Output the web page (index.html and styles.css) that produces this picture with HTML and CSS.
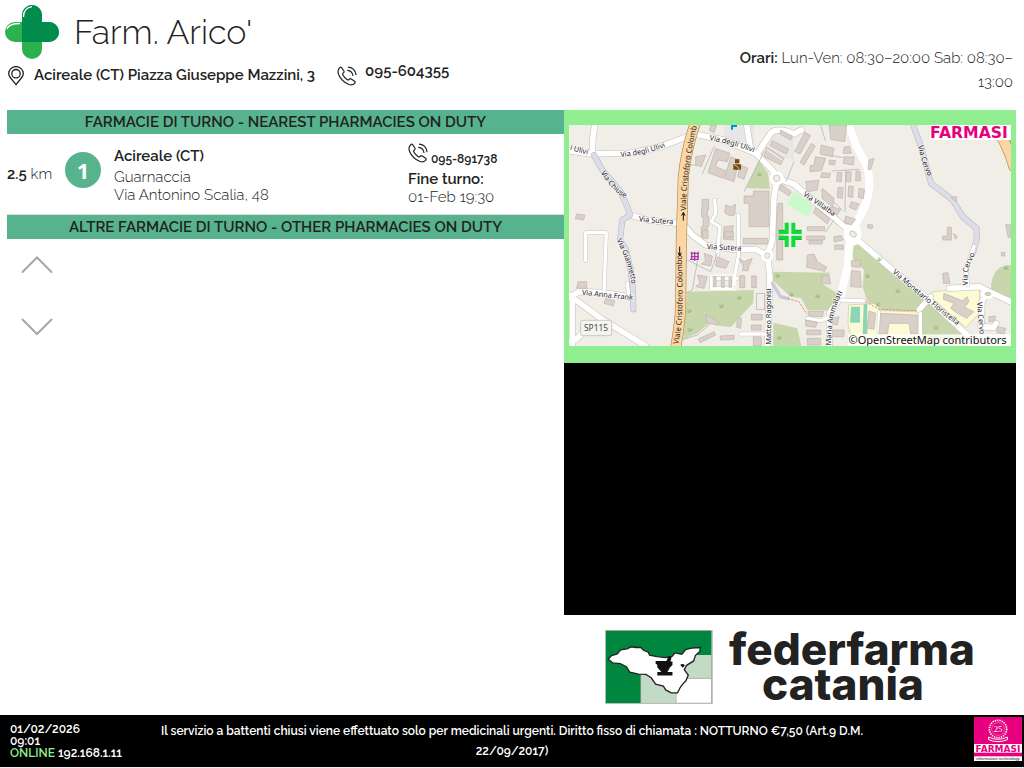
FILE: index.html
```html
<!DOCTYPE html>
<html lang="it">
<head>
<meta charset="utf-8">
<title>Farm. Arico'</title>
<link rel="stylesheet" href="styles.css">
</head>
<body>
<svg class="defs" aria-hidden="true">
  <symbol id="phone" viewBox="0 0 20 20">
    <g fill="none" stroke="#222" stroke-width="1.2" stroke-linecap="round" stroke-linejoin="round">
      <path d="M4.600 1.600 6.900 5Q7.400 6.200 6.300 7Q5.200 7.900 6 9.300Q7.600 12 10.200 13.700Q11.400 14.400 12.200 13.300Q13 12.300 14.200 13L17.600 15.200Q18.600 16.100 17.600 17.300Q15.500 19.700 12 18.500Q4.500 15.500 1.600 8.500Q0 4.200 2.700 1.700Q3.700.7 4.600 1.600Z"/>
      <path d="M11.500 1.200Q18 2 19 8.700M10.700 4.300Q15.200 4.900 15.900 9.500"/>
    </g>
  </symbol>
</svg>

<header class="header">
  <div class="identity">
    <h1 class="brand">
      <svg class="brand-logo" viewBox="0 0 54 54" aria-hidden="true">
        <rect x="17" y="0" width="20" height="54" rx="10" fill="#2bb24c"/>
        <rect x="0" y="17" width="54" height="20" rx="10" fill="#2bb24c"/>
        <path d="M17 37V10a10 10 0 0 1 20 0v7h7a10 10 0 0 1 0 20Z" fill="#018b4c"/>
        <path d="M18.500 12Q18.500 3 27 1.700" fill="none" stroke="#fff" stroke-width="1.300"/>
        <path d="M2 24Q4 18.500 15 18.500" fill="none" stroke="#fff" stroke-width="1.300"/>
      </svg>
      <span>Farm. Arico'</span>
    </h1>
    <div class="contacts">
      <svg class="pin" viewBox="0 0 16 20" aria-hidden="true">
        <g fill="none" stroke="#222" stroke-width="1.300"><path d="M8 18.600 2.300 11.500Q.7 9.500.7 7.600a7.300 7 0 0 1 14.600 0q0 1.900-1.600 3.900Z"/><circle cx="8" cy="7.700" r="4.200"/></g>
      </svg>
      <address class="address">Acireale (CT) Piazza Giuseppe Mazzini, 3</address>
      <svg class="phone" aria-hidden="true"><use href="#phone"/></svg>
      <span class="header-number">095-604355</span>
    </div>
  </div>
  <p class="hours"><b>Orari:</b> Lun-Ven: 08:30–20:00 Sab: 08:30–13:00</p>
</header>

<main class="content">
  <section class="duty">
    <h2 class="band">FARMACIE DI TURNO - NEAREST PHARMACIES ON DUTY</h2>
    <article class="pharmacy">
      <p class="distance"><b>2.5</b> km</p>
      <span class="rank">1</span>
      <div class="place">
        <h3>Acireale (CT)</h3>
        <p>Guarnaccia<br>Via Antonino Scalia, 48</p>
      </div>
      <div class="shift">
        <p class="shift-phone"><svg class="phone" aria-hidden="true"><use href="#phone"/></svg><b>095-891738</b></p>
        <p><b>Fine turno:</b><br>01-Feb 19:30</p>
      </div>
    </article>
    <h2 class="band">ALTRE FARMACIE DI TURNO - OTHER PHARMACIES ON DUTY</h2>
    <div class="scroller">
      <button class="arrow" aria-label="Su"><svg viewBox="0 0 32 18"><path d="M1.500 16 16 1.500 30.500 16"/></svg></button>
      <button class="arrow" aria-label="Giù"><svg viewBox="0 0 32 18"><path d="M1.500 1.500 16 16 30.500 1.500"/></svg></button>
    </div>
  </section>

  <aside class="side">
    <div class="map-frame">
      <svg class="map" viewBox="15 45 1326 663" role="img" aria-label="Mappa">
        <rect x="15" y="45" width="1326" height="663" fill="#f1eee8"/>
        <g fill="#c8d7ab">
          <path d="M585 150 612 190 618 237 547 235Z"/>
          <path d="M370 545 570 540 568 578 500 652 455 645 440 635 400 670 358 688Z"/>
          <path d="M625 485 800 488 772 520 812 545 832 560 796 602 730 600 712 565 680 560 625 510Z"/>
          <path d="M628 638 700 655 712 708 628 708Z"/>
          <path d="M866 400 906 415 986 480 1096 575 1068 606 956 600 910 575 896 530 900 480 862 440Z"/>
          <path d="M1071 606 1094 575 1210 675 1210 708 1071 708Z"/>
          <path d="M1282 520Q1290 465 1341 465V572L1280 548Z"/>
          <path d="M1290 45H1341V150Z" fill="#a5cf94"/>
        </g>
        <path d="M691 242 748 290 730 322 669 282Z" fill="#c8facc"/>
        <path d="M480 45H570V115L480 100ZM620 70 690 80 690 150 600 130Z" fill="#e9e7e5"/>
        <g fill="#fdfbd5" stroke="#ccc8a0" stroke-width="2">
          <path d="M854 585 935 580 950 602 1068 606 1072 708H866L852 640Z"/>
          <path d="M1106 545 1246 535 1249 605 1206 653 1100 562Z"/>
        </g>
        <path d="M861 590H888V638H858ZM899 582H910V672H896Z" fill="#8dd6b5"/>

        <defs>
          <g id="roads">
            <path d="M92 45Q84 90 85 130M15 122 80 132 200 129 290 110 370 80M200 315 250 330 340 340"/>
            <path d="M15 555 110 625 245 708M25 570V708M15 695Q50 690 62 650M15 562 45 545 120 548 200 562"/>
            <path d="M390 72 480 90 575 130 625 180 640 205 630 260 625 390 610 435 618 500 610 708M580 130 620 70Q640 50 690 72L712 60M548 45 560 120"/>
            <path d="M360 345 385 375 425 405 520 420 575 418 605 435"/>
            <path d="M638 205 690 222 740 265 830 340 866 372M854 45 871 100 906 165Q928 225 906 280L866 372 856 410 851 470 831 560 796 610 796 708M886 395 986 480 1096 570 1215 680"/>
            <path d="M1156 535 1246 530 1286 550 1341 576M1265 550 1254 575 1251 650 1290 652 1296 640M1065 600 1100 560"/>
          </g>
          <path id="lanes" d="M65 452V368H127L120 545M190 520 196 565M452 270 455 310 442 335 467 350 460 450M523 315V440L505 535H442V505H520M530 672H608M831 570 900 573M730 625 770 632 800 620M945 606V700M1069 610V680"/>
          <path id="tracks" d="M90 135 115 180 170 245 190 290 198 315 175 330 168 390 185 415 200 480 207 540 208 598M1048 45 1071 110 1101 220 1166 270 1196 320 1238 355V390L1226 430"/>
          <path id="cervo" d="M1230 410 1205 480 1211 525"/>
          <path id="avenue" d="M397 30Q368 110 358 200L352 390 350 590Q348 640 334 720M1278 30Q1325 85 1350 170"/>
        </defs>
        <g fill="none" stroke-linejoin="round" stroke-linecap="round">
          <use href="#roads" stroke="#c0bdb8" stroke-width="20"/>
          <use href="#roads" stroke="#fff" stroke-width="17"/>
          <path d="M855 48 874 102 908 168Q926 225 904 285L866 365 856 410 851 470 831 555" stroke="#fff" stroke-width="24"/>
          <use href="#lanes" stroke="#c9c6c1" stroke-width="13"/>
          <use href="#lanes" stroke="#fff" stroke-width="10"/>
          <path d="M450 110 415 192M540 245 600 125M365 550 385 540 405 425M380 165H400M770 45 784 92M666 215 690 155M790 135 850 145 870 140M845 180 843 305M805 183 885 178M770 240 835 300M785 365 810 330M370 450 440 485 460 430M358 688 400 675 440 640" stroke="#aaa" stroke-width="2"/>
          <use href="#tracks" stroke="#b5b4c4" stroke-width="18"/>
          <use href="#tracks" stroke="#dddde8" stroke-width="15"/>
          <use href="#cervo" stroke="#c9c6c1" stroke-width="14"/>
          <use href="#cervo" stroke="#fff" stroke-width="11"/>
          <path d="M625 520 650 560 672 566" stroke="#c9c8dc" stroke-width="10"/>
          <path d="M672 566 705 575 728 612M905 575 945 598 1058 602" stroke="#f08a80" stroke-width="3" stroke-dasharray="5 6"/>
          <use href="#avenue" stroke="#b58a50" stroke-width="33"/>
          <use href="#avenue" stroke="#fcd6a4" stroke-width="29"/>
        </g>
        <g fill="#fff"><circle cx="638" cy="205" r="21"/><circle cx="610" cy="437" r="18"/><ellipse cx="866" cy="372" rx="27" ry="35"/><ellipse cx="1270" cy="553" rx="20" ry="14"/></g>
        <g fill="#f1eee8" stroke="#bbb8b1" stroke-width="2"><circle cx="638" cy="205" r="10"/><circle cx="610" cy="437" r="8"/><ellipse cx="867" cy="372" rx="11" ry="8" transform="rotate(40 867 372)"/><ellipse cx="1272" cy="552" rx="9" ry="5" fill="#cddcb0"/></g>

        <g fill="#d9d0c9" stroke="#c0b2a8" stroke-width="2">
          <path d="M455 115 498 130 490 155 462 150 455 170 485 182 478 205 432 188ZM500 140 525 150 510 215 482 205ZM530 165 552 175 540 208 520 200ZM395 140 425 135 412 170 395 165ZM440 45H458L450 68 437 62Z"/>
          <path d="M568 243H615V350H555V280H540V258H568ZM38 312 63 315 58 330 34 326ZM415 268H434V300H430V320H434V350H430V380H412V350H417V320H412ZM485 285 500 290 515 283 512 315 498 318 482 308ZM642 280H656V450H638V330ZM480 350 508 347 502 380 510 390 478 388Z"/>
          <path d="M625 92 674 117 667 132 619 107ZM608 112 660 145 650 165 600 140ZM650 60 685 78 680 90 648 72ZM652 222 682 245 675 258 645 238Z"/>
          <path d="M722 67 740 76 708 132 692 124ZM742 100 754 108 720 165 708 157ZM795 45H848L842 95 800 88ZM772 105 810 115 805 140 768 132ZM754 140 785 145 772 182 738 185 738 168 750 165ZM796 150 815 152 812 165 795 163ZM840 112 856 108 862 130 838 130ZM842 140 870 142 868 165 838 160ZM774 188 800 190 796 203 770 202ZM820 187 834 188 832 216 818 214ZM848 185 862 186 860 216 847 214ZM876 183 888 184 890 212 875 213ZM822 232 837 233 835 265 820 262ZM854 228 868 230 866 262 852 260ZM885 235 902 238 898 266 883 262ZM862 275 885 282 875 300 856 292ZM845 318 875 328 862 345 840 338ZM775 235 810 265 806 292 774 265ZM755 292 798 325 790 342 748 308ZM725 215 765 210 760 240 730 245ZM803 290 830 298 820 315 800 305ZM915 150 930 145 920 180 912 178ZM912 342 927 346 924 356 910 353Z"/>
          <path d="M730 350H782V362H730ZM728 378H782V390H728ZM735 392H775V402H735ZM810 380 832 377 838 390 810 396ZM812 405H838V418H812ZM730 435 750 432 760 455 788 472 782 484 728 472ZM862 452 890 450 888 472 862 470ZM862 482 888 484 892 532 860 530ZM775 498 795 495 800 522 772 520ZM1150 352H1162V390H1136V378H1150ZM1136 490 1152 488 1158 520 1138 520ZM1168 370 1180 380 1175 388ZM1325 343 1341 345V382H1332ZM1312 427H1322V438H1312ZM1160 262 1178 260 1176 275Z"/>
          <path d="M538 385H612V402H538ZM415 360H432V385H415ZM482 365H508V382H482ZM420 430 445 438 440 468 412 462 425 452ZM460 440 495 455 485 475 455 468ZM525 445 540 455 565 445 555 468 552 482H535L538 468ZM400 495 430 500 420 535 395 530 408 518ZM448 500H456V530H448ZM472 502H481V532H472ZM495 502H503V532H495ZM527 497H542V533H527ZM563 498H577V533H563ZM562 613H595V630H562ZM562 645H592V660H562ZM568 680 592 682V708H568ZM520 622 533 625 530 655 518 652ZM403 687 450 665 455 675 408 698ZM468 678 510 676V688L470 690ZM425 615 440 622 465 637 460 645 428 638Z"/>
          <path d="M42 515H68V535H38ZM125 565 152 572 148 588 120 580ZM915 603 935 610 930 658 910 655ZM950 610 1060 615V672H1040L1035 640H975L970 672H945ZM1140 550 1195 572 1210 560 1215 575 1202 592 1230 605 1208 625 1180 610 1160 595 1170 580 1138 568ZM732 603 778 605 776 620 735 618ZM725 630 760 637 755 652 725 648ZM728 660H770V674H728ZM730 685H770V705H730ZM805 625 825 620 820 645 805 642ZM805 660H840V680H805ZM1275 620 1295 618 1290 635 1275 635ZM1300 650 1325 655 1320 672 1298 668Z"/>
        </g>
        <rect x="578" y="550" width="24" height="48" fill="none" stroke="#aab1bb" stroke-width="2"/>
        <g fill="none" stroke="#fff" stroke-width="3"><path d="M608 118 655 150M440 495H515V540H440Z"/></g>
        <g fill="none" stroke="#90b77a" stroke-width="2">
          <path id="grass" d="M578 194 586 198 594 194M586 186V199M580 188 586 198 592 188"/>
          <use href="#grass" x="-210" y="410"/><use href="#grass" x="-60" y="370"/><use href="#grass" x="-114" y="395"/><use href="#grass" x="-208" y="466"/><use href="#grass" x="55" y="304"/><use href="#grass" x="97" y="360"/><use href="#grass" x="175" y="365"/><use href="#grass" x="325" y="305"/><use href="#grass" x="360" y="255"/><use href="#grass" x="415" y="350"/><use href="#grass" x="355" y="390"/><use href="#grass" x="530" y="460"/><use href="#grass" x="740" y="280"/><use href="#grass" x="60" y="490"/>
        </g>
        <path d="M504 59V48H519" fill="none" stroke="#0092da" stroke-width="6"/>
        <path d="M513 148H526V160H513ZM508 163H531V179H508Z" fill="#734a08"/><path d="M512 165 520 170 527 178" stroke="#fff" stroke-width="2" fill="none"/>
        <path d="M380 430H405M380 440H405M378 448H402M383 425V450M392 425V452M402 425V450" stroke="#ac39ac" stroke-width="4"/>
        <path d="M358 332V310M353 317 358 307 363 317M347 410V435M342 428 347 438 352 428" fill="none" stroke="#111" stroke-width="3"/>

        <defs>
          <path id="p-ulivi" d="M170 141Q240 135 300 112L330 100"/>
          <path id="p-ulivi2" d="M436 90Q500 102 560 124L590 136"/>
          <path id="p-chiuse" d="M110 188Q145 245 182 263L200 275"/>
          <path id="p-giannetto" d="M158 390Q190 450 202 515L206 550"/>
          <path id="p-colombo" d="M366 302Q366 180 401 40L412 0"/>
          <path id="p-colombo2" d="M343 703Q362 620 353 430V380"/>
          <path id="p-villalba" d="M716 256 830 334"/>
          <path id="p-monetario" d="M985 488Q1065 560 1172 640L1220 680"/>
          <path id="p-cervo" d="M1063 107Q1072 160 1097 210L1107 230"/>
          <path id="p-cervo2" d="M1212 525Q1205 480 1231 436L1241 410"/>
          <path id="p-cervo3" d="M1239 577 1250 700"/>
          <path id="p-ammalati" d="M802 706Q798 620 832 555L850 520"/>
        </defs>
        <g class="street">
          <text x="17" y="119" transform="rotate(16 17 119)">i Ulivi</text>
          <text><textPath href="#p-ulivi">Via degli Ulivi</textPath></text>
          <text><textPath href="#p-ulivi2">Via degli Ulivi</textPath></text>
          <text><textPath href="#p-chiuse">Via Chiuse</textPath></text>
          <text><textPath href="#p-giannetto">Via Giannetto</textPath></text>
          <text x="224" y="334" transform="rotate(5 224 334)">Via Sutera</text>
          <text x="428" y="417" transform="rotate(3 428 417)">Via Sutera</text>
          <text x="53" y="554" transform="rotate(6 53 554)">Via Anna Frank</text>
          <text x="621" y="704" transform="rotate(-90 621 704)">Matteo Ragonisi</text>
          <text><textPath href="#p-villalba">Via Villalba</textPath></text>
          <text><textPath href="#p-monetario">Via Monetario Floristella</textPath></text>
          <text><textPath href="#p-cervo">Via Cervo</textPath></text>
          <text><textPath href="#p-cervo2">Via Cervo</textPath></text>
          <text><textPath href="#p-cervo3">Via Cervo</textPath></text>
          <text><textPath href="#p-ammalati">Maria Ammalati</textPath></text>
        </g>
        <g class="avenue">
          <text><textPath href="#p-colombo">Viale Cristoforo Colomb</textPath></text>
          <text><textPath href="#p-colombo2">Viale Cristoforo Colombo</textPath></text>
        </g>
        <rect x="50" y="631" width="93" height="46" rx="6" fill="#f4f4f1" stroke="#b5b5b1" stroke-width="2"/>
        <text class="shield" x="96" y="664">SP115</text>

        <path d="M644 366H668V338M713 366H688V338M644 383H668V411M713 383H688V411" fill="none" stroke="#0fdc38" stroke-width="12"/>
        <path d="M644 361H662M694 361H713M644 388H662M694 388H713" fill="none" stroke="#0bb52c" stroke-width="3"/>

        <rect x="1098" y="45" width="243" height="45" fill="#fff"/>
        <text class="map-brand" x="1098" y="83">FARMASI</text>
        <rect x="852" y="673" width="489" height="35" fill="#fff" opacity=".8"/>
        <text class="credit" x="1328" y="701">©OpenStreetMap contributors</text>
      </svg>
    </div>
    <div class="screen"></div>
    <div class="sponsor">
      <svg class="sponsor-mark" viewBox="0 0 320 220" aria-hidden="true">
        <rect x="2" y="2" width="316" height="216" fill="#fff" stroke="#bbb" stroke-width="4"/>
        <path d="M2 2H316V74H270V130H106V217H2Z" fill="#00863f"/>
        <path d="M107 120H210V217H107ZM225 74H316V144H225Z" fill="#c3dac4"/>
        <path d="M211 144H316M211 144V217M106 120V217M316 74V217" stroke="#999" stroke-width="2"/>
        <path d="M9 87 19 76 36 71 46 59 65 56 77 50 91 52 106 52 115 61 128 66 132 75 154 79 180 82 200 78 207 68 228 72 239 58 257 54 283 52 281 64 268 76 263 92 242 105 235 118 247 134 240 151 231 160 223 171 215 187 196 187 180 178 173 167 150 161 137 142 121 132 99 131 73 125 63 109 45 100 23 98Z" fill="#fff" stroke="#222" stroke-width="4"/>
        <path d="M150 92H182L188 79H198L194 94H200V104L193 111 188 120 185 125H200V135H155V125H167L155 111V103L150 100ZM223 104Q230 98 237 105L231 112Z" fill="#111"/>
      </svg>
      <p class="sponsor-name">federfarma<br><span>catania</span></p>
    </div>
  </aside>
</main>

<footer class="footer">
  <p class="status">01/02/2026<br>09:01<br><span class="online">ONLINE</span> 192.168.1.11</p>
  <p class="notice">Il servizio a battenti chiusi viene effettuato solo per medicinali urgenti. Diritto fisso di chiamata : NOTTURNO €7,50 (Art.9 D.M. 22/09/2017)</p>
  <svg class="vendor" viewBox="0 0 144 132" role="img" aria-label="Farmasi">
    <rect width="144" height="132" fill="#e6007e"/>
    <rect y="81" width="144" height="26" fill="#fff"/><rect y="118" width="144" height="14" fill="#fff"/>
    <g fill="none" stroke="#fff"><circle cx="72" cy="36" r="26" stroke-width="5" stroke-dasharray="4 3"/><circle cx="72" cy="36" r="19" stroke-width="1"/><path d="M44 60Q72 74 100 60V68Q72 80 44 68Z" stroke-width="3"/></g>
    <text class="vendor-year" x="72" y="45">25</text>
    <text class="vendor-name" x="72" y="104">FARMASI</text>
    <text class="vendor-tag" x="72" y="129">information technology</text>
  </svg>
</footer>
</body>
</html>
```
FILE: styles.css
```css
* { box-sizing: border-box; }
body {
  margin: 0;
  min-height: 100vh;
  display: flex;
  flex-direction: column;
  background: #fff;
  color: #222;
  font: 300 15px/18px "Raleway", "Lato", sans-serif;
  border-bottom: 1px solid #eee;
}
h1, h2, h3, p, address { margin: 0; font-style: normal; }
b { font-weight: 600; }
.defs { position: absolute; width: 0; height: 0; }

.header {
  display: flex;
  justify-content: space-between;
  padding: 5px 11px 0 5px;
  min-height: 110px;
}
.brand { display: flex; align-items: center; gap: 15px; font-size: 34px; font-weight: 300; line-height: 54px; }
.brand-logo { width: 54px; height: 54px; }
.contacts { display: flex; align-items: center; padding: 5px 0 0 3px; }
.pin { width: 16px; height: 20px; margin-right: 10px; }
.address { font-weight: 600; margin-right: 22px; padding-bottom: 2px; }
.phone { width: 20px; height: 20px; }
.header-number { font-weight: 600; margin-left: 8px; padding-bottom: 10px; }
.contacts { height: 28px; }
.hours { width: 280px; padding-top: 41px; text-align: right; line-height: 24px; }

.content { flex: 1; display: grid; grid-template-columns: 557fr 452fr; padding: 0 8px 0 7px; }
.duty, .side { min-width: 0; }
.band { background: #56b38d; font-size: 15px; font-weight: 600; line-height: 24px; text-align: center; }
.pharmacy {
  display: grid;
  grid-template-columns: 58px 49px 294px 1fr;
  align-items: center;
  min-height: 81px;
  border-bottom: 1px solid #ddd;
}
.rank {
  width: 36px;
  height: 36px;
  margin-bottom: 8px;
  border-radius: 50%;
  background: #56b38d;
  color: #fff;
  font: 700 22px/36px "Open Sans", sans-serif;
  text-align: center;
}
.place { padding-top: 1px; }
.place h3 { font-size: 15px; font-weight: 600; line-height: 23px; }
.shift { padding-top: 2px; }
.shift-phone { display: flex; align-items: flex-end; gap: 3px; height: 26px; font-size: 12px; line-height: 16px; padding-bottom: 3px; }
.shift-phone .phone { margin-bottom: 4px; }
.scroller { display: flex; flex-direction: column; align-items: flex-start; gap: 44px; padding: 17px 14px; }
.arrow { display: block; border: 0; padding: 0; background: none; }
.arrow svg { display: block; width: 32px; height: 18px; fill: none; stroke: #a6a6a6; stroke-width: 2; stroke-linecap: round; }

.side { display: flex; flex-direction: column; }
.map-frame { background: #90ee90; padding: 15px 5px 17px; }
.map { display: block; width: 100%; }
.street { font: 22px "Noto Sans", sans-serif; fill: #222; stroke: #fff; stroke-width: 4px; paint-order: stroke; stroke-opacity: .7; }
.avenue { font: 23px "Noto Sans", sans-serif; fill: #222; }
.shield { font: 25px "Noto Sans", sans-serif; fill: #444; text-anchor: middle; }
.map-brand { font: bold 47px "DejaVu Sans", sans-serif; fill: #e6007e; }
.credit { font: 33px "Noto Sans", sans-serif; fill: #111; text-anchor: end; }
.screen { background: #000; aspect-ratio: 452 / 252; }
.sponsor { flex: 1; display: flex; align-items: center; gap: 16px; padding: 4px 0 0 41px; }
.sponsor-mark { width: 108px; height: 74px; flex: none; }
.sponsor-name { font: 800 44px/35px "Inter", sans-serif; text-align: center; }
.sponsor-name span { padding-right: 18px; }

.footer {
  display: grid;
  grid-template-columns: 150px 1fr 150px;
  background: #000;
  color: #fff;
  font-weight: 600;
  min-height: 52px;
}
.status { padding: 8px 0 0 10px; font-size: 12px; line-height: 12px; }
.online { color: #90ee90; }
.notice { font-size: 12px; line-height: 20px; text-align: center; padding: 6px 8px 0; }
.vendor { width: 48px; height: 44px; margin-top: 2px; justify-self: end; margin-right: 2px; }
.vendor-year { font: 26px "Liberation Serif", serif; fill: #fff; text-anchor: middle; }
.vendor-name { font: bold 27px "DejaVu Sans", sans-serif; fill: #e6007e; text-anchor: middle; }
.vendor-tag { font: 13px "Liberation Sans", sans-serif; fill: #222; text-anchor: middle; }
```
